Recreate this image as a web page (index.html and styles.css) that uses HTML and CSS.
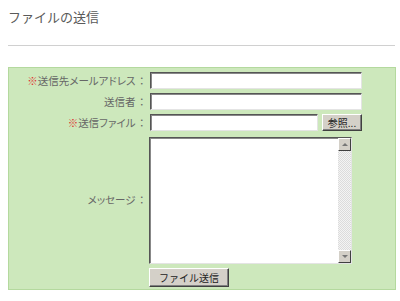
FILE: index.html
```html
<!DOCTYPE html>
<html lang="ja">
<head>
  <meta charset="UTF-8" />
  <title>ファイルの送信</title>
  <link rel="stylesheet" href="styles.css">
</head>
<body>
  <h1 class="page-title">ファイルの送信</h1>
  <hr class="rule">

  <form class="send-form">
    <label class="label" for="to"><span class="req">※</span>送信先メールアドレス<span class="colon">：</span></label>
    <div class="field"><input type="text" id="to" class="text-input"></div>

    <label class="label" for="from">送信者<span class="colon">：</span></label>
    <div class="field"><input type="text" id="from" class="text-input"></div>

    <label class="label" for="file"><span class="req">※</span>送信ファイル<span class="colon">：</span></label>
    <div class="field file-field">
      <input type="text" id="file" class="text-input file-input">
      <button type="button" class="btn browse-btn">参照...</button>
    </div>

    <label class="label message-label" for="msg">メッセージ<span class="colon">：</span></label>
    <div class="field">
      <div class="memo">
        <textarea id="msg" class="memo-text"></textarea>
        <div class="scrollbar">
          <span class="sb-btn sb-up"></span>
          <span class="sb-track"></span>
          <span class="sb-btn sb-down"></span>
        </div>
      </div>
    </div>

    <div></div>
    <div class="field">
      <button type="submit" class="btn submit-btn">ファイル送信</button>
    </div>
  </form>
</body>
</html>
```

FILE: styles.css
```css
* {
  box-sizing: border-box;
}

body {
  margin: 0;
  padding: 0 0 0 8px;
  font-family: "Noto Sans CJK JP", "Noto Sans", sans-serif;
  background: #fff;
  color: #666;
}

.page-title {
  margin: 0;
  padding-top: 9px;
  height: 28px;
  font-size: 13px;
  font-weight: normal;
  color: #5a5a5a;
  line-height: 16px;
}

.rule {
  width: 387px;
  margin: 17px 0 0 0;
  border: none;
  border-top: 1px solid #d0d0d0;
}

.send-form {
  width: 388px;
  margin-top: 21px;
  padding: 4px 0 2px 0;
  background: #cde8bc;
  border: 1px solid #b4d99e;
  display: grid;
  grid-template-columns: 138px auto;
  column-gap: 3px;
  row-gap: 4px;
}

.label {
  font-size: 10.5px;
  font-feature-settings: "palt";
  line-height: 17px;
  text-align: right;
  color: #666;
  white-space: nowrap;
}

.colon {
  font-feature-settings: normal;
  margin-left: 1px;
}

.req {
  color: #e03030;
}

.message-label {
  align-self: center;
}

.field {
  display: flex;
  align-items: center;
}

.text-input {
  width: 212px;
  height: 17px;
  margin: 0;
  padding: 0 2px;
  background: #fff;
  border: 1px solid;
  border-color: #555 #e4e4e4 #e4e4e4 #555;
  box-shadow: inset 1px 1px 0 #888;
  font-size: 11px;
  outline: none;
}

.file-field {
  gap: 4px;
}

.file-input {
  width: 168px;
}

.btn {
  margin: 0;
  padding: 0;
  background: #d4d0c8;
  border: 1px solid;
  border-color: #fff #404040 #404040 #fff;
  box-shadow: inset -1px -1px 0 #808080;
  font-family: "Noto Sans CJK JP", sans-serif;
  font-size: 10px;
  color: #222;
  line-height: 15px;
}

.browse-btn {
  width: 40px;
  height: 17px;
}

.submit-btn {
  width: 80px;
  height: 19px;
  margin-left: -1px;
}

.memo {
  display: flex;
  width: 203px;
  height: 127px;
  margin-left: -1px;
  margin-top: 2px;
  border: 1px solid;
  border-color: #555 #e4e4e4 #e4e4e4 #555;
  box-shadow: inset 1px 1px 0 #888;
  background: #fff;
}

.memo-text {
  flex: 1;
  margin: 0;
  border: none;
  resize: none;
  background: transparent;
  outline: none;
  overflow: hidden;
}

.scrollbar {
  width: 13px;
  display: flex;
  flex-direction: column;
}

.sb-btn {
  height: 13px;
  background: #d4d0c8;
  border: 1px solid;
  border-color: #fff #404040 #404040 #fff;
  display: flex;
  align-items: center;
  justify-content: center;
}

.sb-btn::after {
  content: "";
  border-left: 3px solid transparent;
  border-right: 3px solid transparent;
}

.sb-up::after {
  border-bottom: 3px solid #777;
}

.sb-down::after {
  border-top: 3px solid #777;
}

.sb-track {
  flex: 1;
  background: repeating-conic-gradient(#dcdcdc 0 25%, #f4f4f4 0 50%) 0 0 / 2px 2px;
}
```
